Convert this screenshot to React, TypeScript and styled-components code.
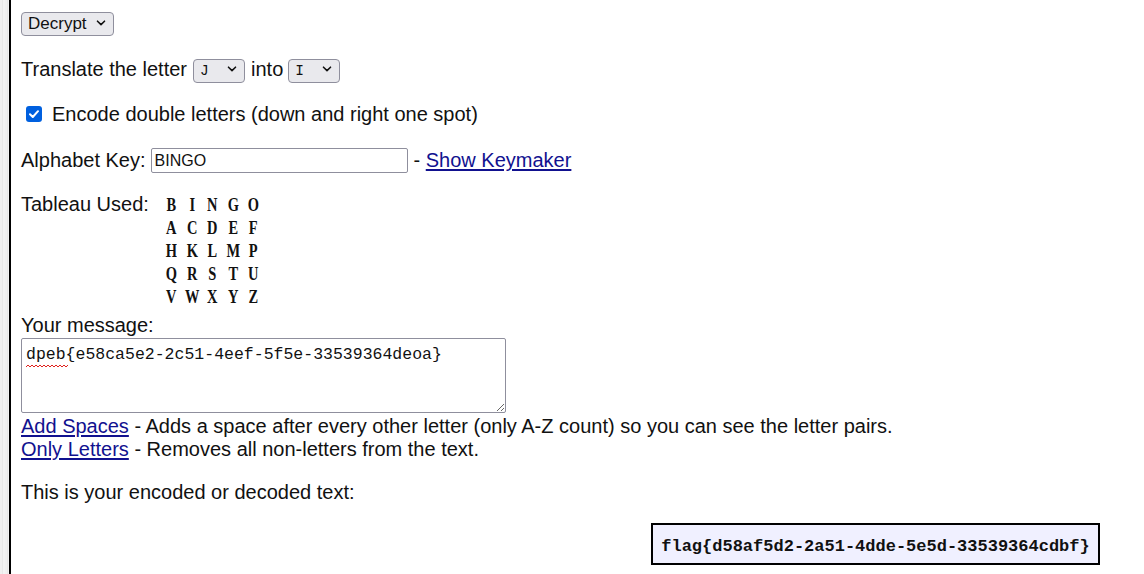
import React from 'react'
import styled, { createGlobalStyle } from 'styled-components'

const GlobalStyle = createGlobalStyle`
  html, body {
    margin: 0;
    padding: 0;
    background: #fff;
  }
  body {
    font-family: "Liberation Sans", Arial, sans-serif;
    font-size: 20px;
    color: #111;
  }
`

const Layout = styled.div`
  display: flex;
  min-height: 574px;
`

const Gutter = styled.div`
  width: 9px;
  flex-shrink: 0;
  background:
    repeating-linear-gradient(90deg, #f0f0f0 0 2px, #e8e8e8 2px 3px, #f3f3f3 3px 5px),
    #eee;
  border-right: 2px solid #000;
`

const Content = styled.div`
  flex: 1;
  padding: 11px 0 0 10px;
  display: flex;
  flex-direction: column;
`

const Row = styled.div<{ $top: number; $h?: number }>`
  display: flex;
  align-items: center;
  margin-top: ${p => p.$top}px;
  height: ${p => p.$h ?? 24}px;
  line-height: 23px;
  white-space: pre;
`

const SelectWrap = styled.span<{ $w: number; $ml?: number; $mr?: number }>`
  position: relative;
  display: inline-block;
  width: ${p => p.$w}px;
  height: 24px;
  margin-left: ${p => p.$ml ?? 0}px;
  margin-right: ${p => p.$mr ?? 0}px;
`

const Select = styled.select<{ $mono?: boolean }>`
  appearance: none;
  width: 100%;
  height: 100%;
  box-sizing: border-box;
  background: #e9e9ed;
  border: 1px solid #8f8f9d;
  border-radius: 4px;
  color: #111;
  padding: 0 0 0 6px;
  font-family: ${p => (p.$mono ? '"Liberation Mono", monospace' : '"Liberation Sans", Arial, sans-serif')};
  font-size: ${p => (p.$mono ? 14.5 : 17)}px;
  outline: none;
`

const Chevron = styled.svg`
  position: absolute;
  right: 8px;
  top: 8px;
  width: 10px;
  height: 8px;
  pointer-events: none;
`

const Label = styled.label`
  display: flex;
  align-items: center;
  cursor: pointer;
`

const Box = styled.span`
  position: relative;
  width: 16px;
  height: 16px;
  margin: 0 10px 0 5px;
  display: inline-block;
`

const CheckInput = styled.input`
  appearance: none;
  margin: 0;
  width: 16px;
  height: 16px;
  border-radius: 3px;
  background: #0060df;
  display: block;
`

const Tick = styled.svg`
  position: absolute;
  left: 3px;
  top: 4px;
  width: 10px;
  height: 8px;
  pointer-events: none;
`

const TextInput = styled.input`
  box-sizing: border-box;
  width: 257px;
  height: 25px;
  margin: 0 6px 0 5px;
  padding: 0 3px;
  border: 1px solid #8f8f9d;
  border-radius: 2px;
  font-family: "Liberation Sans", Arial, sans-serif;
  font-size: 16px;
  color: #111;
  outline: none;
`

const Link = styled.a`
  color: #11118f;
  text-decoration: underline;
  text-underline-offset: 2px;
`

const TableauRow = styled.div`
  display: flex;
  align-items: flex-start;
  margin-top: 20px;
  line-height: 23px;
`

const TableauLabel = styled.span`
  width: 140px;
`

const Tableau = styled.div`
  display: grid;
  grid-template-columns: repeat(5, 20.5px);
  grid-auto-rows: 23px;
  font-family: "Liberation Serif", "Times New Roman", serif;
  font-weight: bold;
  font-size: 19.5px;
  color: #111;
`

const Cell = styled.span`
  text-align: center;
  transform: scaleX(0.74);
`

const Plain = styled.div<{ $top?: number }>`
  margin-top: ${p => p.$top ?? 0}px;
  line-height: 23px;
  white-space: nowrap;
`

const AreaWrap = styled.div`
  position: relative;
  width: 485px;
  height: 75px;
  margin-top: 1px;
`

const Message = styled.textarea`
  box-sizing: border-box;
  width: 485px;
  height: 75px;
  margin: 0;
  padding: 6px 4px 3px;
  border: 1px solid #8f8f9d;
  border-radius: 2px;
  font-family: "Liberation Mono", monospace;
  font-size: 16.5px;
  line-height: 20px;
  color: #111;
  resize: both;
  outline: none;
  display: block;
`

const Squiggle = styled.svg`
  position: absolute;
  left: 5px;
  top: 26px;
  width: 42px;
  height: 4px;
  pointer-events: none;
`

const Output = styled.div`
  display: flex;
  margin-top: 19px;
  padding-left: 630px;
`

const Flag = styled.div`
  box-sizing: border-box;
  width: 449px;
  height: 42px;
  border: 2px solid #000;
  background: #f0f0ff;
  display: flex;
  align-items: center;
  justify-content: center;
  font-family: "Liberation Mono", monospace;
  font-weight: bold;
  font-size: 17px;
  color: #111;
  padding-top: 4px;
`

const ChevronIcon = () => (
  <Chevron viewBox="0 0 10 8">
    <path d="M1.5 2.2 L5 5.6 L8.5 2.2" fill="none" stroke="#111" strokeWidth="1.6" strokeLinecap="round" strokeLinejoin="round" />
  </Chevron>
)

const grid = ['BINGO', 'ACDEF', 'HKLMP', 'QRSTU', 'VWXYZ']

const App: React.FunctionComponent = () => {
  return (
    <>
      <GlobalStyle />
      <Layout>
        <Gutter />
        <Content>
          <Row $top={0}>
            <SelectWrap $w={93}>
              <Select defaultValue="decrypt">
                <option value="encrypt">Encrypt</option>
                <option value="decrypt">Decrypt</option>
              </Select>
              <ChevronIcon />
            </SelectWrap>
          </Row>

          <Row $top={22}>
            Translate the letter
            <SelectWrap $w={52} $ml={6} $mr={6}>
              <Select $mono defaultValue="J">
                <option value="J">J</option>
                <option value="Q">Q</option>
              </Select>
              <ChevronIcon />
            </SelectWrap>
            into
            <SelectWrap $w={52} $ml={5}>
              <Select $mono defaultValue="I">
                <option value="I">I</option>
                <option value="K">K</option>
              </Select>
              <ChevronIcon />
            </SelectWrap>
          </Row>

          <Row $top={21}>
            <Label>
              <Box>
                <CheckInput type="checkbox" defaultChecked />
                <Tick viewBox="0 0 10 8">
                  <path d="M1 4.2 L3.8 7 L9 1.2" fill="none" stroke="#fff" strokeWidth="2" strokeLinecap="round" strokeLinejoin="round" />
                </Tick>
              </Box>
              Encode double letters (down and right one spot)
            </Label>
          </Row>

          <Row $top={22} $h={25}>
            Alphabet Key:
            <TextInput defaultValue="BINGO" />
            {'- '}<Link href="#keymaker">Show Keymaker</Link>
          </Row>

          <TableauRow>
            <TableauLabel>Tableau Used:</TableauLabel>
            <Tableau>
              {grid.map(row => row.split('').map(ch => <Cell key={ch}>{ch}</Cell>))}
            </Tableau>
          </TableauRow>

          <Plain $top={6}>Your message:</Plain>
          <AreaWrap>
            <Message spellCheck={false} defaultValue="dpeb{e58ca5e2-2c51-4eef-5f5e-33539364deoa}" />
            <Squiggle viewBox="0 0 42 4">
              <path d="M0 3 L2 1 L4 3 L6 1 L8 3 L10 1 L12 3 L14 1 L16 3 L18 1 L20 3 L22 1 L24 3 L26 1 L28 3 L30 1 L32 3 L34 1 L36 3 L38 1 L40 3 L42 1" fill="none" stroke="#e0201c" strokeWidth="1" />
            </Squiggle>
          </AreaWrap>

          <Plain $top={2}>
            <Link href="#spaces">Add Spaces</Link> - Adds a space after every other letter (only A-Z count) so you can see the letter pairs.
          </Plain>
          <Plain>
            <Link href="#letters">Only Letters</Link> - Removes all non-letters from the text.
          </Plain>

          <Plain $top={20}>This is your encoded or decoded text:</Plain>

          <Output>
            <Flag>flag{'{'}d58af5d2-2a51-4dde-5e5d-33539364cdbf{'}'}</Flag>
          </Output>
        </Content>
      </Layout>
    </>
  )
}

export default App
